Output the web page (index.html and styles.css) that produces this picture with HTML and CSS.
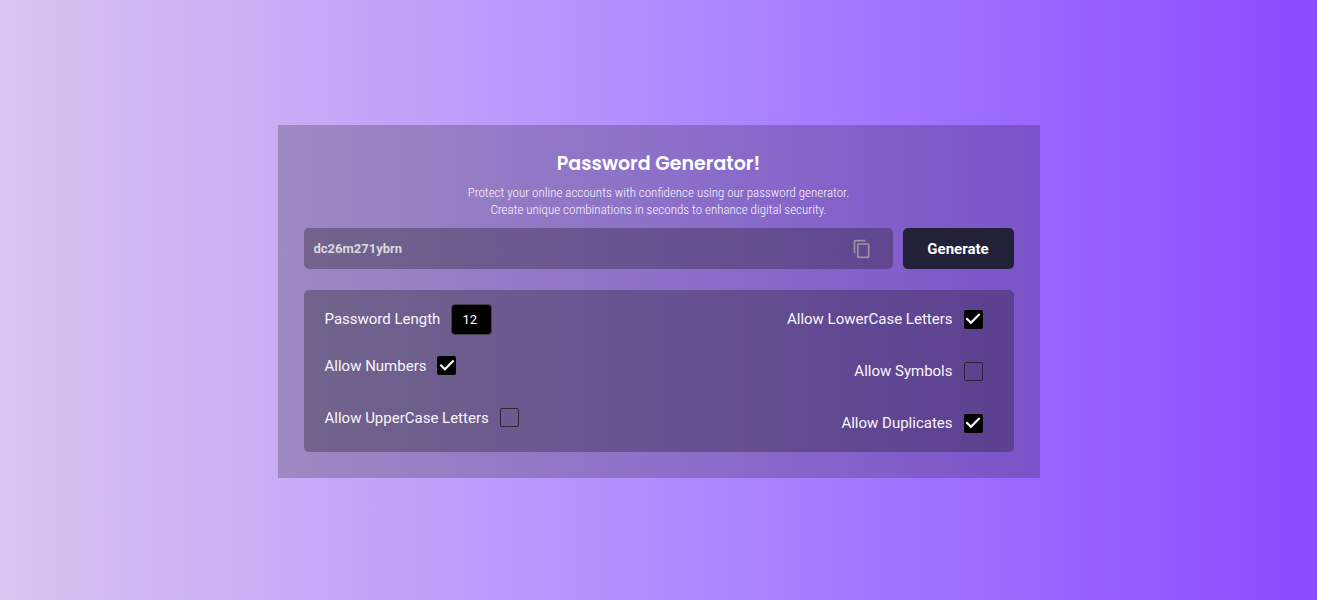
FILE: index.html
```html
<!DOCTYPE html>
<html lang="en">
<head>
<meta charset="utf-8">
<meta name="viewport" content="width=device-width, initial-scale=1">
<title>Password Generator</title>
<link rel="stylesheet" href="styles.css">
</head>
<body>
<main class="card">
  <header class="intro">
    <h1 class="title">Password Generator!</h1>
    <p class="subtitle">Protect your online accounts with confidence using our password generator.<br>Create unique combinations in seconds to enhance digital security.</p>
  </header>
  <div class="output">
    <div class="field">
      <input class="password" type="text" value="dc26m271ybrn" aria-label="Generated password" readonly>
      <button class="copy" type="button" aria-label="Copy password">
        <svg class="copy-icon" viewBox="0 0 24 24" aria-hidden="true"><path fill="currentColor" d="M16 1H4c-1.1 0-2 .9-2 2v14h2V3h12V1zm3 4H8c-1.1 0-2 .9-2 2v14c0 1.100.9 2 2 2h11c1.100 0 2-.9 2-2V7c0-1.100-.9-2-2-2zm0 16H8V7h11v14z"/></svg>
      </button>
    </div>
    <button class="generate" type="button">Generate</button>
  </div>
  <section class="options" aria-label="Options">
    <div class="column">
      <label class="option option-length">Password Length <input class="length" type="text" inputmode="numeric" value="12"></label>
      <label class="option">Allow Numbers <input class="check" type="checkbox" checked></label>
      <label class="option">Allow UpperCase Letters <input class="check" type="checkbox"></label>
    </div>
    <div class="column column-end">
      <label class="option">Allow LowerCase Letters <input class="check" type="checkbox" checked></label>
      <label class="option">Allow Symbols <input class="check" type="checkbox"></label>
      <label class="option">Allow Duplicates <input class="check" type="checkbox" checked></label>
    </div>
  </section>
</main>
</body>
</html>
```
FILE: styles.css
```css
* {
  box-sizing: border-box;
}

body {
  margin: 0;
  min-height: 100vh;
  padding: 3px 16px 0;
  display: flex;
  align-items: center;
  justify-content: center;
  background: linear-gradient(to right, #d8c5f0, #b08cff 50%, #8a4aff);
  color: #f8f5fb;
  font-family: Roboto, sans-serif;
}

.card {
  width: 100%;
  max-width: 762px;
  padding: 24px 26px 26px;
  background: rgba(20, 20, 20, 0.23);
}

.intro {
  text-align: center;
}

.title {
  margin: 0;
  color: #fff;
  font: 600 19px/30px Poppins, Inter, sans-serif;
}

.subtitle {
  margin: 5px 0 10px;
  font: 300 13px/17px "Roboto Condensed", Roboto, sans-serif;
}

.output {
  display: flex;
  gap: 10px;
}

.field {
  flex: 1;
  min-width: 0;
  height: 41px;
  padding: 0 21px 0 10px;
  display: flex;
  align-items: center;
  border-radius: 5px;
  background: rgba(18, 18, 18, 0.3);
}

.password {
  flex: 1;
  min-width: 0;
  padding: 0;
  border: 0;
  background: none;
  color: #dcd8dc;
  font: 700 13px/20px Roboto, sans-serif;
}

.copy {
  padding: 0;
  border: 0;
  display: flex;
  background: none;
  color: #9b95a0;
}

.copy-icon {
  width: 20px;
  height: 20px;
}

.generate {
  width: 111px;
  padding: 0;
  border: 0;
  border-radius: 5px;
  background: #22213a;
  color: #fff;
  font: 700 15px/20px Roboto, sans-serif;
}

.options {
  margin-top: 21px;
  padding: 3px 31px 3px 21px;
  display: flex;
  justify-content: space-between;
  align-items: center;
  border-radius: 5px;
  background: rgba(18, 18, 18, 0.3);
}

.column {
  display: flex;
  flex-direction: column;
  align-items: flex-start;
}

.column-end {
  align-items: flex-end;
}

.option {
  height: 52px;
  display: flex;
  align-items: center;
  gap: 11px;
  font-size: 15px;
  font-weight: 400;
  line-height: 20px;
}

.option-length {
  height: 41px;
}

.length {
  width: 41px;
  height: 31px;
  padding: 0 0 0 10px;
  border: 1px solid #444050;
  border-radius: 4px;
  background: #000;
  color: #fff;
  font: 400 13px/18px Roboto, sans-serif;
}

.check {
  appearance: none;
  width: 19px;
  height: 19px;
  margin: 0;
  border: 1px solid #2a2433;
  border-radius: 2px;
}

.check:checked {
  border: 0;
  background: #000;
}

.check:checked::before {
  content: "";
  display: block;
  width: 100%;
  height: 100%;
  background: #fff;
  clip-path: polygon(39% 78%, 11% 50%, 19% 42%, 39% 62%, 81% 20%, 89% 28%);
}
```
